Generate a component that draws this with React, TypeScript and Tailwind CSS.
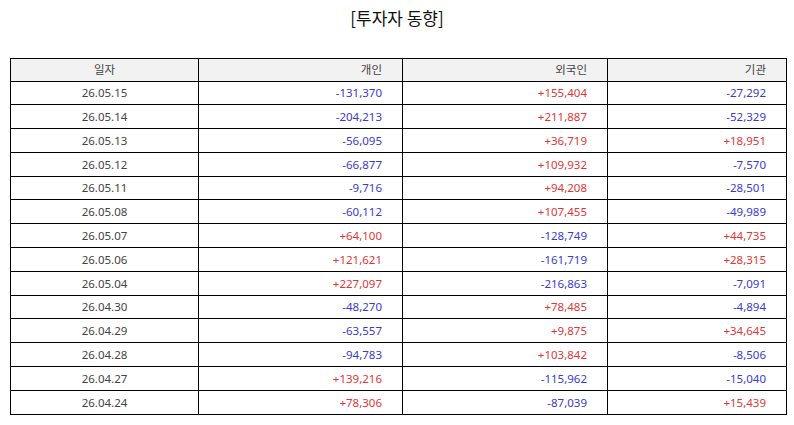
import React from "react";

const rows: [string, string, string, string][] = [
  ["26.05.15", "-131,370", "+155,404", "-27,292"],
  ["26.05.14", "-204,213", "+211,887", "-52,329"],
  ["26.05.13", "-56,095", "+36,719", "+18,951"],
  ["26.05.12", "-66,877", "+109,932", "-7,570"],
  ["26.05.11", "-9,716", "+94,208", "-28,501"],
  ["26.05.08", "-60,112", "+107,455", "-49,989"],
  ["26.05.07", "+64,100", "-128,749", "+44,735"],
  ["26.05.06", "+121,621", "-161,719", "+28,315"],
  ["26.05.04", "+227,097", "-216,863", "-7,091"],
  ["26.04.30", "-48,270", "+78,485", "-4,894"],
  ["26.04.29", "-63,557", "+9,875", "+34,645"],
  ["26.04.28", "-94,783", "+103,842", "-8,506"],
  ["26.04.27", "+139,216", "-115,962", "-15,040"],
  ["26.04.24", "+78,306", "-87,039", "+15,439"],
];

function Num({ v }: { v: string }) {
  const pos = v.startsWith("+");
  return (
    <td
      className={
        "border border-black text-right pr-[20px] " +
        (pos ? "text-[#e03636]" : "text-[#3a3ad0]")
      }
    >
      {v}
    </td>
  );
}

export default function App() {
  return (
    <div
      className="w-[794px] h-[425px] bg-white"
      style={{ fontFamily: '"Noto Sans", "Noto Sans CJK KR", sans-serif' }}
    >
      <div
        className="h-[58px] pt-[4px] text-center text-[17px] leading-[27px] text-[#111]"
        style={{ fontFamily: '"Noto Sans CJK KR", sans-serif' }}
      >
        [투자자 동향]
      </div>
      <div className="px-[10px]">
        <table className="w-[776px] border-collapse table-fixed text-[11.5px] text-[#444] font-normal">
          <colgroup>
            <col className="w-[188px]" />
            <col className="w-[204px]" />
            <col className="w-[205px]" />
            <col className="w-[179px]" />
          </colgroup>
          <thead>
            <tr className="h-[22.5px] bg-[#f2f2f2]">
              <th className="border border-black font-normal text-center">일자</th>
              <th className="border border-black font-normal text-right pr-[20px]">개인</th>
              <th className="border border-black font-normal text-right pr-[20px]">외국인</th>
              <th className="border border-black font-normal text-right pr-[20px]">기관</th>
            </tr>
          </thead>
          <tbody>
            {rows.map((r) => (
              <tr key={r[0]} className="h-[23.8px]">
                <td className="border border-black text-center">{r[0]}</td>
                <Num v={r[1]} />
                <Num v={r[2]} />
                <Num v={r[3]} />
              </tr>
            ))}
          </tbody>
        </table>
      </div>
    </div>
  );
}
